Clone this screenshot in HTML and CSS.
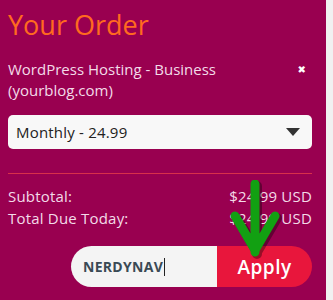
FILE: index.html
```
<!DOCTYPE html>
<html>
<head>
<meta charset="utf-8">
<link rel="stylesheet" href="styles.css">
</head>
<body>
<div class="panel">
  <h1 class="title">Your Order</h1>
  <div class="item">
    <div class="item-name">WordPress Hosting - Business<br>(yourblog.com)</div>
    <span class="remove">&#x2716;</span>
  </div>
  <div class="select">
    <span>Monthly - 24.99</span>
    <svg class="caret" width="14" height="8" viewBox="0 0 14 8"><path d="M0 0H14L7 8Z" fill="#333"/></svg>
  </div>
  <div class="divider"></div>
  <div class="row"><span>Subtotal:</span><span>$24.99 USD</span></div>
  <div class="row"><span>Total Due Today:</span><span>$24.99 USD</span></div>
  <div class="coupon">
    <div class="code">NERDYNAV<span class="cursor"></span></div>
    <div class="apply">Apply</div>
  </div>
  <svg class="arrow" width="60" height="90" viewBox="0 0 60 90">
    <g stroke-linecap="round" stroke-linejoin="round" fill="none">
      <path d="M33 6V74M13 38L33 72L53 38" stroke="rgba(0,0,0,0.35)" stroke-width="10"/>
      <path d="M31 4V72M11 36L31 70L51 36" stroke="#12a012" stroke-width="9"/>
    </g>
  </svg>
</div>
</body>
</html>
```
FILE: styles.css
```
html, body { margin: 0; padding: 0; }
body {
  background: #f1f1f1;
  font-family: "Open Sans", "DejaVu Sans", sans-serif;
  width: 333px;
  height: 300px;
  overflow: hidden;
}
.panel {
  position: relative;
  width: 326px;
  height: 300px;
  box-sizing: border-box;
  background: #990050;
  padding: 8px 14px 0 8px;
  color: #f3dbe8;
}
.title {
  margin: 0;
  font-weight: 400;
  font-size: 27px;
  line-height: 34px;
  color: #ff6a1f;
  letter-spacing: 0;
}
.item {
  display: flex;
  justify-content: space-between;
  margin-top: 17px;
}
.item-name {
  font-size: 15px;
  line-height: 21px;
}
.remove {
  color: #fff;
  font-size: 10px;
  margin: 3px 6px 0 0;
}
.select {
  margin-top: 14px;
  height: 34px;
  box-sizing: border-box;
  background: #f8f8f8;
  border-radius: 5px;
  display: flex;
  align-items: center;
  justify-content: space-between;
  padding: 0 12px 0 8px;
  color: #222;
  font-size: 15px;
  letter-spacing: 0.2px;
}
.divider {
  margin-top: 24px;
  height: 1px;
  background: #d8304a;
}
.row {
  display: flex;
  justify-content: space-between;
  font-size: 15px;
  line-height: 22px;
  letter-spacing: 0.2px;
}
.divider + .row { margin-top: 11px; }
.coupon {
  margin: 17px 0 0 63px;
  display: flex;
  height: 41px;
}
.code {
  width: 146px;
  box-sizing: border-box;
  background: #f4f4f4;
  border-radius: 21px 0 0 21px;
  display: flex;
  align-items: center;
  padding-left: 12px;
  color: #3a4a55;
  font-weight: 700;
  font-size: 14px;
  letter-spacing: 0.3px;
}
.cursor {
  display: inline-block;
  width: 1px;
  height: 18px;
  background: #222;
  margin-left: 1px;
}
.apply {
  flex: 1;
  background: #e8163c;
  border-radius: 0 21px 21px 0;
  color: #fff;
  font-weight: 600;
  font-size: 19px;
  display: flex;
  align-items: center;
  justify-content: center;
  letter-spacing: 0.5px;
}
.arrow {
  position: absolute;
  left: 224px;
  top: 180px;
}
```
